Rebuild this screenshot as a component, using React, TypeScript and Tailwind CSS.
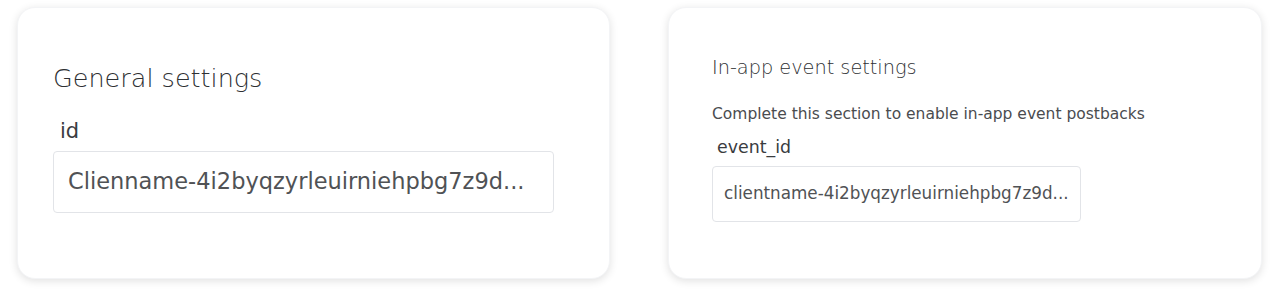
export default function App() {
  return (
    <div className="w-[1280px] h-[296px] bg-white flex gap-[58px] pl-[17px] pr-[18px] pt-[7px] font-['DejaVu_Sans','Liberation_Sans',sans-serif]">
      {/* General settings */}
      <div className="w-[593px] h-[272px] bg-white rounded-[18px] shadow-[0_2px_8px_rgba(0,0,0,0.12)] border border-gray-100 pl-[35px] pt-[55px]">
        <h2 className="text-[25.5px] leading-[30px] font-light text-[#2e3033]">General settings</h2>
        <p className="mt-[25px] pl-[7px] text-[21px] leading-[26px] text-[#3a3c3f]">id</p>
        <div className="mt-[7px] w-[501px] h-[62px] border border-[#e2e4e8] rounded-[4px] flex items-center pl-[14px] text-[22.5px] text-[#505255] whitespace-nowrap">
          Clienname-4i2byqzyrleuirniehpbg7z9d...
        </div>
      </div>

      {/* In-app event settings */}
      <div className="w-[594px] h-[272px] bg-white rounded-[18px] shadow-[0_2px_8px_rgba(0,0,0,0.12)] border border-gray-100 pl-[43px] pt-[47px]">
        <h2 className="text-[19.3px] leading-[26px] font-light text-[#2e3033]">In-app event settings</h2>
        <p className="mt-[22px] text-[15.5px] leading-[22px] text-[#4a4c4f] whitespace-nowrap">
          Complete this section to enable in-app event postbacks
        </p>
        <p className="mt-[11px] pl-[5px] text-[17.4px] leading-[22px] text-[#3a3c3f]">event_id</p>
        <div className="mt-[8px] w-[369px] h-[56px] border border-[#e2e4e8] rounded-[4px] flex items-center pl-[11px] text-[16.8px] text-[#505255] whitespace-nowrap">
          clientname-4i2byqzyrleuirniehpbg7z9d...
        </div>
      </div>
    </div>
  );
}
